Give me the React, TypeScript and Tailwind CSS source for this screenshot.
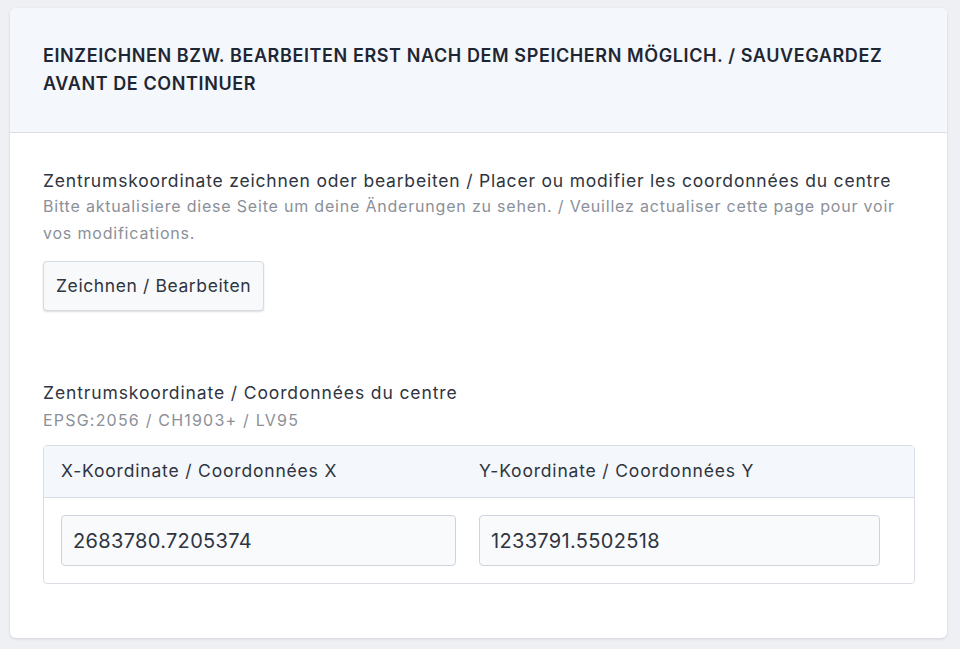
export default function App() {
  return (
    <div className="min-h-screen bg-[#eef0f4] px-[10px] pt-[8px] pb-[12px] font-['Inter',sans-serif]">
      <div className="w-[937px] overflow-hidden rounded-[6px] bg-white shadow-[0_1px_3px_rgba(0,0,0,0.12)]">
        <div className="flex h-[125px] items-center border-b border-[#d9dde4] bg-[#f4f7fb] px-[33px]">
          <h2 className="text-[18px] font-semibold uppercase leading-[28px] tracking-[0.6px] text-[#1f2633]">
            Einzeichnen bzw. bearbeiten erst nach dem Speichern möglich. / Sauvegardez avant de continuer
          </h2>
        </div>

        <div className="px-[33px] pt-[36px] pb-[54px]">
          <div className="text-[17.5px] leading-[24px] tracking-[0.8px] text-[#2f3541]">
            Zentrumskoordinate zeichnen oder bearbeiten / Placer ou modifier les coordonnées du centre
          </div>
          <div className="text-[16px] leading-[27px] tracking-[0.8px] text-[#8b9099]">
            Bitte aktualisiere diese Seite um deine Änderungen zu sehen. / Veuillez actualiser cette page pour voir
            vos modifications.
          </div>
          <button className="mt-[14px] h-[50px] rounded-[4px] border border-[#d6dae1] bg-[#f8f9fb] px-[12px] text-[17.5px] tracking-[0.6px] text-[#2f3541] shadow-[0_1px_2px_rgba(0,0,0,0.14)]">
            Zeichnen / Bearbeiten
          </button>

          <div className="mt-[70px] text-[17.5px] leading-[24px] tracking-[0.88px] text-[#2f3541]">
            Zentrumskoordinate / Coordonnées du centre
          </div>
          <div className="mt-[2px] text-[16px] leading-[27px] tracking-[1.2px] text-[#8b9099]">
            EPSG:2056 / CH1903+ / LV95
          </div>

          <div className="mt-[11px] w-[872px] rounded-[4px] border border-[#d9dde4]">
            <div className="grid h-[52px] grid-cols-[417px_1fr] items-center border-b border-[#d9dde4] bg-[#f4f7fb] text-[17.5px] tracking-[0.82px] text-[#2f3541]">
              <div className="pl-[17px]">X-Koordinate / Coordonnées X</div>
              <div className="pl-[18px]">Y-Koordinate / Coordonnées Y</div>
            </div>
            <div className="grid grid-cols-[417px_1fr] py-[17px]">
              <div className="pl-[17px]">
                <input
                  readOnly
                  value="2683780.7205374"
                  className="h-[51px] w-[395px] rounded-[4px] border border-[#cfd4dc] bg-[#f8fafc] px-[11px] text-[20px] tracking-[0.33px] text-[#2f3541] outline-none"
                />
              </div>
              <div className="pl-[18px]">
                <input
                  readOnly
                  value="1233791.5502518"
                  className="h-[51px] w-[401px] rounded-[4px] border border-[#cfd4dc] bg-[#f8fafc] px-[11px] text-[20px] tracking-[0.33px] text-[#2f3541] outline-none"
                />
              </div>
            </div>
          </div>
        </div>
      </div>
    </div>
  )
}
